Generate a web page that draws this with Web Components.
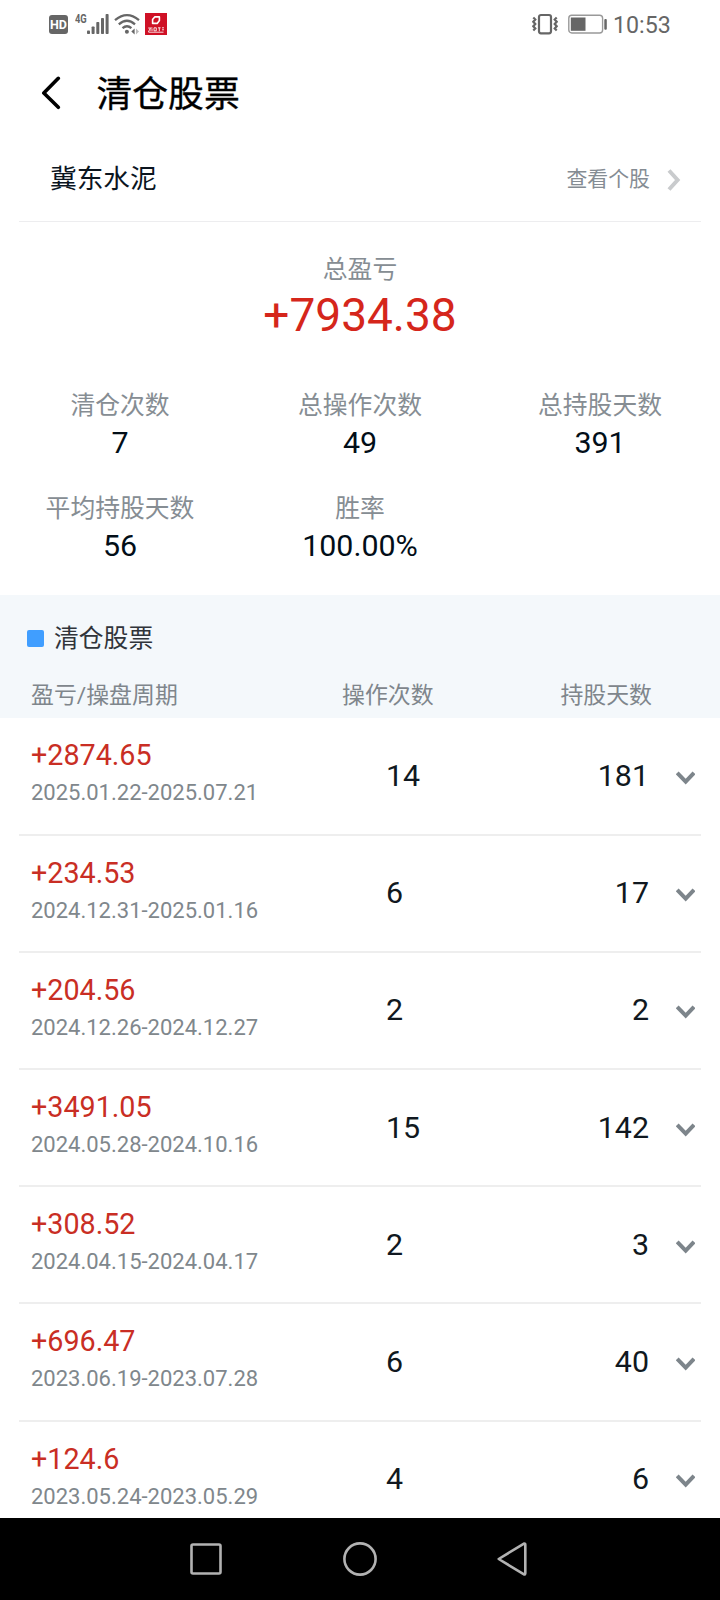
<!DOCTYPE html>
<html lang="zh-CN">
<head>
<meta charset="utf-8">
<title>清仓股票</title>
<style>
html,body{margin:0;padding:0;background:#fff}
body{font-family:Roboto,"Noto Sans CJK SC",sans-serif;color:#0b151f}
</style>
</head>
<body>
<stock-page></stock-page>
<script>
const define = (name, html, setup) => {
  const template = document.createElement('template');
  template.innerHTML = html;
  customElements.define(name, class extends HTMLElement {
    connectedCallback() {
      if (this.shadowRoot) return;
      this.attachShadow({mode: 'open'}).append(template.content.cloneNode(true));
      if (setup) setup(this.shadowRoot, this);
    }
  });
};

define('status-bar', `
<style>
:host{display:flex;height:48px;box-sizing:border-box;padding:0 50px 0 49px;align-items:center;color:#666}
svg{display:block;flex:none}
.hd{width:19px;height:19px;border-radius:3px;background:#666;color:#fff;font:700 12.5px/20px Roboto,sans-serif;text-align:center;margin-right:7px}
.g{font:700 12px/12px Roboto,sans-serif;width:12px;height:22px;transform:scaleX(.78);transform-origin:0 0}
.sig{margin-right:5px}.wifi{margin-right:5px}
.time{font-size:23.2px;line-height:32px;margin-left:5px;width:57px;padding-top:2px;white-space:nowrap}
.sp{flex:1}
</style>
<div class="hd">HD</div><div class="g">4G</div>
<svg class="sig" width="22" height="22" viewBox="0 0 22 22" fill="#666"><rect y="17.5" width="3" height="3.5" rx=".8"/><rect x="4.6" y="13.5" width="3" height="7.5" rx=".8"/><rect x="9.3" y="9" width="3" height="12" rx=".8"/><rect x="14" y="5" width="3" height="16" rx=".8"/><rect x="18.6" y="1" width="3" height="20" rx=".8"/></svg>
<svg class="wifi" width="26" height="22" viewBox="0 0 26 22" fill="none" stroke="#666" stroke-width="2.3"><path d="M1 7.2Q13 -3 25 7.2M4.8 11.3Q13 4.3 21 11.3M8.5 15.2Q13 11.2 17.4 15.2"/><circle cx="12.9" cy="18.8" r="2" fill="#666" stroke="none"/><path d="M20.6 15.5v6l-3.3-3z" fill="#666" stroke="none"/><path d="M22 15.5v6l3-3z" fill="#bbb" stroke="none"/></svg>
<svg width="22" height="22" viewBox="0 0 22 22"><rect width="22" height="22" fill="#cf1126"/><path d="M9.7 3.9h4.7v3.7l-2.2 2.8H7.6V6.5z" fill="none" stroke="#fff" stroke-width="1.6" stroke-linejoin="round"/><path d="M3.2 15h4.3M5.4 15l-2 4M5 17h3M9 14.8v3h2.3v-3zM13 14.8h2.6M14.3 14.8v3.4M17 14.8h2M17 16.8h2M3.5 19.2h15" stroke="#fff" stroke-width="1" opacity=".85" fill="none"/></svg>
<span class="sp"></span>
<svg style="margin-right:10px" width="26" height="22" viewBox="0 0 26 22" fill="none" stroke="#666"><rect x="7" y="2" width="12" height="18.3" rx="2" stroke-width="2.2"/><path d="M1.3 4.5l2 2-2 2.3 2 2.2-2 2.2 2 2.3-2 2M24.7 4.5l-2 2 2 2.3-2 2.2 2 2.2-2 2.3 2 2" stroke-width="2.2"/></svg>
<svg width="40" height="22" viewBox="0 0 40 22"><rect x=".8" y="2.2" width="33.8" height="17.8" rx="3" fill="none" stroke="#999" stroke-width="1.4"/><rect x="2.8" y="4.5" width="14.7" height="13.3" fill="#666"/><rect x="36.3" y="6" width="2.5" height="10.8" rx="1" fill="#666"/></svg>
<span class="time">10:53</span>`);

define('title-bar', `
<style>
:host{display:flex;height:92px;align-items:center;box-sizing:border-box;padding-left:41px}
svg{display:block;margin-right:35.5px;margin-bottom:2px}
h1{margin:2px 0 0;font-size:35.8px;line-height:48px;font-weight:400;color:#000;-webkit-text-stroke:.35px #000}
</style>
<svg width="20" height="34" viewBox="0 0 20 34" fill="none" stroke="#000" stroke-width="3.6" stroke-linecap="round" stroke-linejoin="round"><path d="M17.3 2.3L2.8 17l14.5 14.3"/></svg>
<h1><slot></slot></h1>`);

define('stock-link', `
<style>
:host{display:flex;height:82px;box-sizing:border-box;margin:0 19px;padding:0 20px 3px 31px;border-bottom:1px solid #ededef;align-items:center;font-size:26.7px;line-height:40px}
.name{flex:1}.more{font-size:20.9px;color:#858c93;margin-right:17px}
svg{display:block;margin-top:1px}
</style>
<span class="name"><slot></slot></span><span class="more">查看个股</span>
<svg width="14" height="22" viewBox="0 0 14 22" fill="none" stroke="#c9cbcd" stroke-width="4"><path d="M2 1.5L10.6 11 2 20.5"/></svg>`);

define('stat-item', `
<style>
:host{display:block;text-align:center}
.l{font-size:24.8px;line-height:36px;color:#868d93}
.v{font-size:30.4px;line-height:38px;color:#020e18}
:host([big]) .l{line-height:40px}
:host([big]) .v{font-size:46px;line-height:50px;color:#d5261b}
</style>
<div class="l"></div><div class="v"><slot></slot></div>`,
(root, el) => { root.querySelector('.l').textContent = el.getAttribute('label'); });

define('stat-grid', `
<style>
:host{display:grid;grid-template-columns:repeat(3,1fr);row-gap:29px}
</style><slot></slot>`);

define('list-head', `
<style>
:host{display:block;height:123px;background:#f4f8fb;box-sizing:border-box;padding-top:24px}
.t{display:flex;align-items:center;padding-left:27px;height:40px;font-size:24.8px;line-height:40px;color:#30343a}
i{width:17px;height:17px;border-radius:2px;background:#409eff;margin:0 10px 2px 0}
.c{display:grid;grid-template-columns:311px 1fr auto;padding:0 68px 0 31px;margin-top:17px;font-size:22.9px;line-height:40px;color:#7f868c}
</style>
<div class="t"><i></i><slot></slot></div>
<div class="c"><span>盈亏/操盘周期</span><span>操作次数</span><span>持股天数</span></div>`);

define('trade-row', `
<style>
:host{display:grid;grid-template-columns:355px 1fr auto 19px;height:117.2px;box-sizing:border-box;margin:0 19px;padding:0 6px 0 12px;border-bottom:2px solid #eee;align-items:center;font-size:30.4px;line-height:38px;color:#101820}
.p{font-size:28.7px;line-height:38px;color:#c92e24}
.d{font-size:22px;line-height:32px;color:#80878c;white-space:nowrap;margin-top:3px}
.i{padding-bottom:6px}
.n{padding-right:27px}
svg{display:block;margin-top:4px}
</style>
<div class="i"><div class="p"></div><div class="d"></div></div><span class="o"></span><span class="n"></span>
<svg width="19" height="14" viewBox="0 0 19 14" fill="none" stroke="#7d858b" stroke-width="4"><path d="M1.2 1.8L9.7 10.6 18 1.8"/></svg>`,
(root, el) => {
  for (const [c, a] of [['.p','profit'],['.d','period'],['.o','ops'],['.n','days']])
    root.querySelector(c).textContent = el.getAttribute(a);
});

define('nav-bar', `
<style>
:host{display:grid;grid-template-columns:153px 154px 30px;padding-left:190px;height:82px;background:#000;align-items:center;box-sizing:border-box}
svg{display:block}
</style>
<svg width="32" height="34" viewBox="0 0 32 34" fill="none" stroke="#b2b2b2" stroke-width="2.6"><rect x="1.5" y="2.5" width="29" height="29" rx="1.5"/></svg>
<svg width="34" height="34" viewBox="0 0 34 34" fill="none" stroke="#b2b2b2" stroke-width="2.6"><circle cx="17" cy="17" r="15.6"/></svg>
<svg width="30" height="34" viewBox="0 0 30 34" fill="none" stroke="#b2b2b2" stroke-width="2.6" stroke-linejoin="round"><path d="M1.7 17L27 1.6Q28.3 1.4 28.3 2.8V31.2Q28.3 32.6 27 32.4z"/></svg>`);

const trades = [
  ['+2874.65','2025.01.22-2025.07.21',14,181],
  ['+234.53','2024.12.31-2025.01.16',6,17],
  ['+204.56','2024.12.26-2024.12.27',2,2],
  ['+3491.05','2024.05.28-2024.10.16',15,142],
  ['+308.52','2024.04.15-2024.04.17',2,3],
  ['+696.47','2023.06.19-2023.07.28',6,40],
  ['+124.6','2023.05.24-2023.05.29',4,6]
];

define('stock-page', `
<style>
:host{display:flex;flex-direction:column;width:720px;height:1600px;overflow:hidden;background:#fff}
.total{margin-top:28px}
stat-grid{margin:47.5px 0 0;height:207.5px;align-content:start}
.list{flex:1;min-height:0;overflow:hidden;padding-top:.4px;box-sizing:border-box}
</style>
<status-bar></status-bar>
<title-bar>清仓股票</title-bar>
<stock-link>冀东水泥</stock-link>
<stat-item class="total" big label="总盈亏">+7934.38</stat-item>
<stat-grid>
<stat-item label="清仓次数">7</stat-item>
<stat-item label="总操作次数">49</stat-item>
<stat-item label="总持股天数">391</stat-item>
<stat-item label="平均持股天数">56</stat-item>
<stat-item label="胜率">100.00%</stat-item>
</stat-grid>
<list-head>清仓股票</list-head>
<div class="list">${trades.map(([p,d,o,n]) => `<trade-row profit="${p}" period="${d}" ops="${o}" days="${n}"></trade-row>`).join('')}</div>
<nav-bar></nav-bar>`);
</script>
</body>
</html>
